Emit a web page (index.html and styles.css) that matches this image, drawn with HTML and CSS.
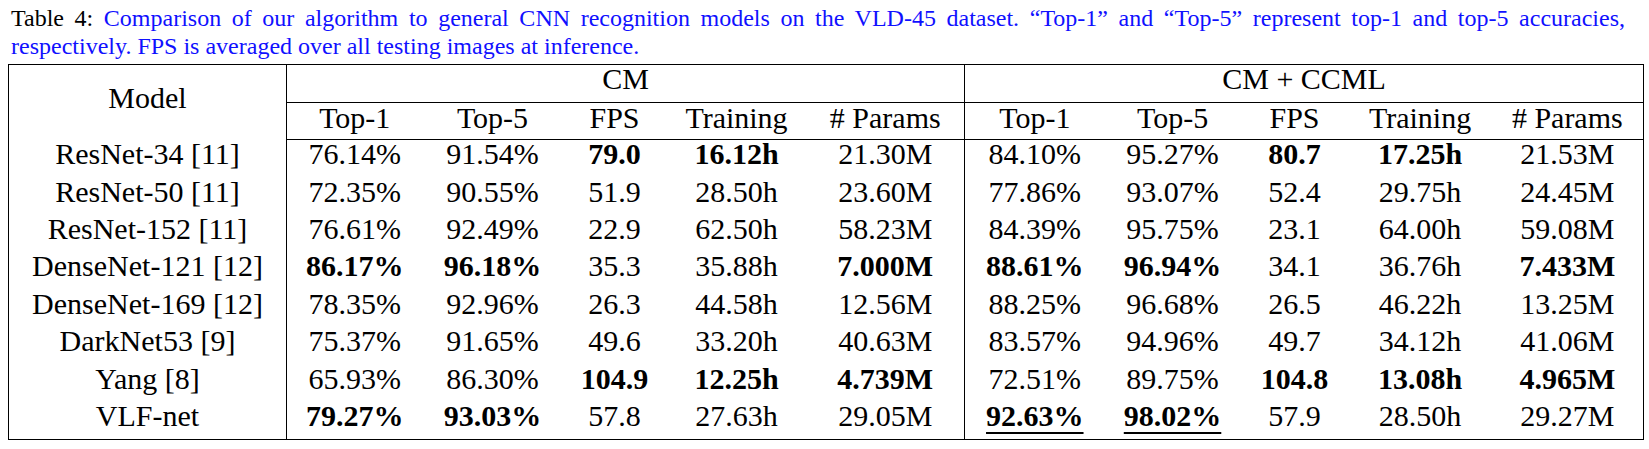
FILE: index.html
```html
<!DOCTYPE html>
<html>
<head>
<meta charset="utf-8">
<link rel="stylesheet" href="styles.css">
</head>
<body>
<div class="page">
  <div class="caption">
    <div class="cap-line first"><span class="label">Table 4:</span> Comparison of our algorithm to general CNN recognition models on the VLD-45 dataset. “Top-1” and “Top-5” represent top-1 and top-5 accuracies,</div>
    <div class="cap-line">respectively. FPS is averaged over all testing images at inference.</div>
  </div>
  <table class="results">
    <colgroup>
      <col class="c-model">
      <col class="c136"><col class="c140"><col class="c104"><col class="c140"><col class="c158">
      <col class="c140"><col class="c136"><col class="c108"><col class="c143"><col class="c152">
    </colgroup>
    <thead>
      <tr>
        <th rowspan="2" class="model sep">Model</th>
        <th colspan="5" class="group sep">CM</th>
        <th colspan="5" class="group">CM + CCML</th>
      </tr>
      <tr class="sub">
        <th>Top-1</th><th>Top-5</th><th>FPS</th><th>Training</th><th class="sep"># Params</th>
        <th>Top-1</th><th>Top-5</th><th>FPS</th><th>Training</th><th># Params</th>
      </tr>
    </thead>
    <tbody>
      <tr>
        <td class="sep">ResNet-34 [11]</td>
        <td>76.14%</td><td>91.54%</td><td class="b">79.0</td><td class="b">16.12h</td><td class="sep">21.30M</td>
        <td>84.10%</td><td>95.27%</td><td class="b">80.7</td><td class="b">17.25h</td><td>21.53M</td>
      </tr>
      <tr>
        <td class="sep">ResNet-50 [11]</td>
        <td>72.35%</td><td>90.55%</td><td>51.9</td><td>28.50h</td><td class="sep">23.60M</td>
        <td>77.86%</td><td>93.07%</td><td>52.4</td><td>29.75h</td><td>24.45M</td>
      </tr>
      <tr>
        <td class="sep">ResNet-152 [11]</td>
        <td>76.61%</td><td>92.49%</td><td>22.9</td><td>62.50h</td><td class="sep">58.23M</td>
        <td>84.39%</td><td>95.75%</td><td>23.1</td><td>64.00h</td><td>59.08M</td>
      </tr>
      <tr>
        <td class="sep">DenseNet-121 [12]</td>
        <td class="b">86.17%</td><td class="b">96.18%</td><td>35.3</td><td>35.88h</td><td class="sep b">7.000M</td>
        <td class="b">88.61%</td><td class="b">96.94%</td><td>34.1</td><td>36.76h</td><td class="b">7.433M</td>
      </tr>
      <tr>
        <td class="sep">DenseNet-169 [12]</td>
        <td>78.35%</td><td>92.96%</td><td>26.3</td><td>44.58h</td><td class="sep">12.56M</td>
        <td>88.25%</td><td>96.68%</td><td>26.5</td><td>46.22h</td><td>13.25M</td>
      </tr>
      <tr>
        <td class="sep">DarkNet53 [9]</td>
        <td>75.37%</td><td>91.65%</td><td>49.6</td><td>33.20h</td><td class="sep">40.63M</td>
        <td>83.57%</td><td>94.96%</td><td>49.7</td><td>34.12h</td><td>41.06M</td>
      </tr>
      <tr>
        <td class="sep">Yang [8]</td>
        <td>65.93%</td><td>86.30%</td><td class="b">104.9</td><td class="b">12.25h</td><td class="sep b">4.739M</td>
        <td>72.51%</td><td>89.75%</td><td class="b">104.8</td><td class="b">13.08h</td><td class="b">4.965M</td>
      </tr>
      <tr>
        <td class="sep">VLF-net</td>
        <td class="b">79.27%</td><td class="b">93.03%</td><td>57.8</td><td>27.63h</td><td class="sep">29.05M</td>
        <td class="b"><span class="ul">92.63%</span></td><td class="b"><span class="ul">98.02%</span></td><td>57.9</td><td>28.50h</td><td>29.27M</td>
      </tr>
    </tbody>
  </table>
</div>
</body>
</html>
```

FILE: styles.css
```css
html, body {
  margin: 0;
  padding: 0;
  background: #ffffff;
}

.page {
  padding: 4px 0 0 8px;
  font-family: "Liberation Serif", "Times New Roman", serif;
  color: #000;
}

.caption {
  width: 1614px;
  margin-left: 3px;
  font-size: 24px;
  line-height: 28px;
  color: #1010ff;
}

.cap-line.first {
  text-align: justify;
  text-align-last: justify;
}

.caption .label {
  color: #000;
}

.results {
  margin-top: 4px;
  border-collapse: collapse;
  table-layout: fixed;
  width: 1636px;
  border: 1px solid #000;
  font-size: 30px;
}

.c-model { width: 278px; }
.c104 { width: 104px; }
.c108 { width: 108px; }
.c136 { width: 136px; }
.c140 { width: 140px; }
.c143 { width: 143px; }
.c152 { width: 152px; }
.c158 { width: 158px; }

.results tr {
  height: 37.4px;
}

.results th,
.results td {
  padding: 0 0 9px;
  line-height: 28px;
  text-align: center;
  vertical-align: middle;
  font-weight: normal;
  white-space: nowrap;
}

.results th.group {
  border-bottom: 1px solid #000;
  padding-bottom: 9px;
}

.results th.model {
  padding-bottom: 8px;
}

.results thead tr.sub th {
  border-bottom: 1px solid #000;
  padding-bottom: 6px;
}

.results .sep {
  border-right: 1px solid #000;
}

.results td.b {
  font-weight: bold;
}

.ul {
  text-decoration: underline;
  text-decoration-thickness: 2px;
  text-underline-offset: 6px;
}
```
